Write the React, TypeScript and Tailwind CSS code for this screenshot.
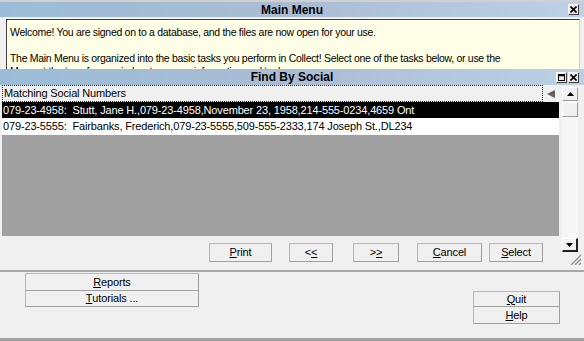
import React from "react";

const ui = "font-['Liberation_Sans',Arial,sans-serif]";

/* ---------- small pieces ---------- */
function CaptionBtn({ kind }: { kind: "close" | "max" }) {
  return (
    <div className="flex h-[11px] w-[11px] items-center justify-center border border-t-white border-l-white border-r-[#404040] border-b-[#404040] bg-[#e8e8e8]">
      {kind === "close" ? (
        <svg width="7" height="7" viewBox="0 0 7 7">
          <path d="M0.5 0.5 L6.5 6.5 M6.5 0.5 L0.5 6.5" stroke="#000" strokeWidth="1.6" />
        </svg>
      ) : (
        <svg width="7" height="7" viewBox="0 0 7 7">
          <rect x="0.5" y="0.5" width="6" height="6" fill="none" stroke="#000" strokeWidth="1" />
          <path d="M0 1.5 H7" stroke="#000" strokeWidth="1.5" />
        </svg>
      )}
    </div>
  );
}

function TitleBar({ title, h, children }: { title: string; h: string; children: React.ReactNode }) {
  return (
    <div className={`relative flex ${h} items-center justify-center bg-gradient-to-r from-[#9bbcd9] via-[#aabcd4] to-[#bcd1e6]`}>
      <span className="text-[12px] font-bold leading-none text-black">{title}</span>
      <div className="absolute right-[5px] top-[2px] flex gap-[1px]">{children}</div>
    </div>
  );
}

function Btn({ children, className = "" }: { children: React.ReactNode; className?: string }) {
  return (
    <div
      className={`flex items-center justify-center border border-[#b8b8b8] border-r-[#a0a0a0] border-b-[#a0a0a0] bg-[#f0f0f0] text-[11px] leading-none tracking-[-0.15px] text-black ${className}`}
    >
      {children}
    </div>
  );
}

function ScrollBtn({ dir }: { dir: "up" | "down" }) {
  return (
    <div
      className={`flex h-[14px] w-[16px] items-center justify-center bg-[#f0f0f0] ${
        dir === "up"
          ? "border border-t-white border-l-white border-r-[#a0a0a0] border-b-[#a0a0a0]"
          : "border border-t-white border-l-white border-r-2 border-b-2 border-r-[#202020] border-b-[#202020]"
      }`}
    >
      <svg width="7" height="4" viewBox="0 0 7 4">
        {dir === "up" ? <path d="M0 4 L3.5 0 L7 4 Z" fill="#000" /> : <path d="M0 0 L3.5 4 L7 0 Z" fill="#000" />}
      </svg>
    </div>
  );
}

/* ---------- page ---------- */
export default function App() {
  return (
    <div className={`flex h-[341px] w-[584px] flex-col overflow-hidden border-t-2 border-b-[3px] border-t-[#d0d0d0] border-b-[#a0a0a0] bg-[#f0f0f0] ${ui}`}>
      {/* Main Menu */}
      <TitleBar title="Main Menu" h="h-[15px]">
        <CaptionBtn kind="close" />
      </TitleBar>

      <div className="ml-[6px] mr-[4px] mt-[2px] h-[50px] shrink-0 overflow-hidden whitespace-nowrap border border-b-0 border-[#404040] border-r-[#d0d0d0] bg-[#ffffe8] px-[3px] pt-[6px] text-[10.5px] leading-[13px] tracking-[-0.3px] text-black">
        <p>Welcome! You are signed on to a database, and the files are now open for your use.</p>
        <p className="mt-[13px]">
          The Main Menu is organized into the basic tasks you perform in Collect! Select one of the tasks below, or use the
        </p>
        <p>Menu at the top of your window to access information and tools.</p>
      </div>

      {/* Find By Social */}
      <div className="flex h-[203px] shrink-0 flex-col border-b-2 border-b-[#a8a8a8]">
        <TitleBar title="Find By Social" h="h-[16px]">
          <div className="mt-[1px] flex gap-[1px]">
            <CaptionBtn kind="max" />
            <CaptionBtn kind="close" />
          </div>
        </TitleBar>

        <div className="flex flex-1">
          {/* list + buttons */}
          <div className="flex w-[559px] flex-col pl-[2px]">
            <div className="flex h-[151px] flex-col text-[11px] leading-none tracking-[-0.15px]">
              <div className="flex h-[17px] items-stretch bg-[#f0f0f0]">
                <div className="flex w-[541px] items-center border border-dotted border-[#303030] pl-[1px] text-black">
                  Matching Social Numbers
                </div>
                <div className="flex flex-1 items-center justify-center">
                  <svg width="8" height="8" viewBox="0 0 8 8">
                    <path d="M0 4 L8 0 L8 8 Z" fill="#606060" />
                  </svg>
                </div>
              </div>
              <div className="flex h-[16px] items-center whitespace-nowrap bg-black pl-[1px] text-white">
                079-23-4958:&nbsp; Stutt, Jane H.,079-23-4958,November 23, 1958,214-555-0234,4659 Ont
              </div>
              <div className="flex h-[17px] items-center whitespace-nowrap bg-white pl-[1px] text-black">
                079-23-5555:&nbsp; Fairbanks, Frederich,079-23-5555,509-555-2333,174 Joseph St.,DL234
              </div>
              <div className="flex-1 bg-[#a0a0a0]" />
            </div>

            <div className="mt-[7px] flex h-[19px]">
              <Btn className="ml-[207px] w-[63px]">
                <span className="underline">P</span>rint
              </Btn>
              <Btn className="ml-[17px] w-[44px]">
                &lt;<span className="underline">&lt;</span>
              </Btn>
              <Btn className="ml-[20px] w-[46px]">
                &gt;<span className="underline">&gt;</span>
              </Btn>
              <Btn className="ml-[18px] w-[65px]">
                <span className="underline">C</span>ancel
              </Btn>
              <Btn className="ml-[7px] w-[54px]">
                <span className="underline">S</span>elect
              </Btn>
            </div>
          </div>

          {/* scrollbar */}
          <div className="flex w-[25px] flex-col pl-[3px]">
            <div className="mt-[2px] flex h-[151px] w-[16px] flex-col bg-[#f6f6f6]">
              <ScrollBtn dir="up" />
              <div className="mt-[1px] h-[15px] w-[16px] border border-t-white border-l-white border-r-[#a0a0a0] border-b-[#a0a0a0] bg-[#f0f0f0]" />
            </div>
            <ScrollBtn dir="down" />
            <div className="ml-[8px] mt-[2px]">
              <svg width="12" height="11" viewBox="0 0 12 11">
                <path d="M11 1 L1 11 M11 5 L5 11 M11 9 L9 11" stroke="#909090" strokeWidth="1.2" />
              </svg>
            </div>
          </div>
        </div>
      </div>

      {/* Main Menu bottom */}
      <div className="flex flex-1">
        <div className="ml-[25px] mt-[1px] flex w-[174px] flex-col">
          <Btn className="h-[18px]">
            <span className="underline">R</span>eports
          </Btn>
          <Btn className="h-[16px] border-t-0">
            <span className="underline">T</span>utorials ...
          </Btn>
        </div>
        <div className="ml-auto mr-[24px] mt-[19px] flex w-[87px] flex-col">
          <Btn className="h-[16px]">
            <span className="underline">Q</span>uit
          </Btn>
          <Btn className="h-[17px] border-t-0">
            <span className="underline">H</span>elp
          </Btn>
        </div>
      </div>
    </div>
  );
}
